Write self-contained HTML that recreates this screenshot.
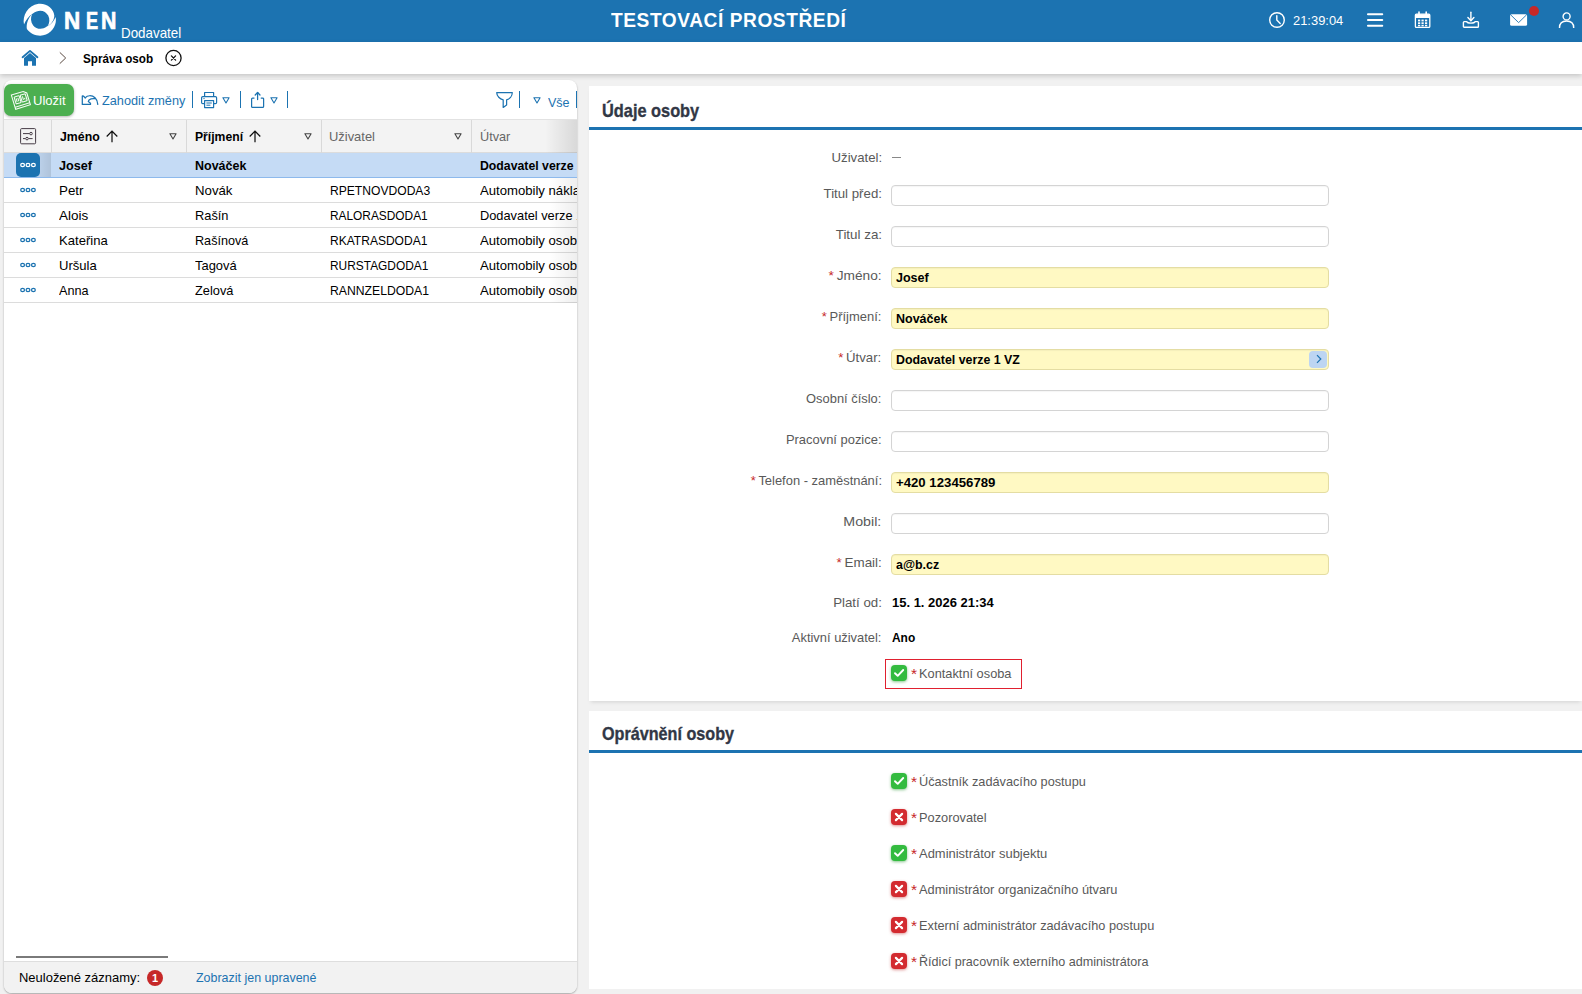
<!DOCTYPE html>
<html lang="cs">
<head>
<meta charset="utf-8">
<title>NEN - Správa osob</title>
<style>
*{box-sizing:border-box;margin:0;padding:0}
html,body{width:1582px;height:994px;overflow:hidden}
body{font-family:"Liberation Sans",sans-serif;font-size:13px;color:#000;background:#f1f1f1;position:relative}
.abs{position:absolute}
/* header */
#hdr{position:absolute;left:0;top:0;width:1582px;height:42px;background:#1c73b1}
#hdr .nen{position:absolute;top:7px;font-size:24px;font-weight:bold;color:#fff;line-height:28px;-webkit-text-stroke:.7px #fff}
#hdr .dod{position:absolute;left:120.5px;top:24.3px;font-size:14.2px;color:#fff;line-height:18px}
#hdr .title{position:absolute;left:611px;top:8px;font-size:20px;font-weight:bold;color:#fff;letter-spacing:.6px;line-height:24px}
#hdr .time{position:absolute;left:1293px;top:13px;font-size:13px;color:#fff;line-height:16px}
/* breadcrumb */
#bc{position:absolute;left:0;top:42px;width:1582px;height:32px;background:#fff;box-shadow:0 2px 5px rgba(0,0,0,.18)}
#bc .t{position:absolute;left:83px;top:10px;font-weight:bold;font-size:12px;line-height:15px}
/* left panel */
#lp{position:absolute;left:4px;top:80px;width:573px;height:913px;background:#fff;border-radius:8px;box-shadow:0 1px 2px rgba(0,0,0,.32);overflow:hidden}
/* right panels */
.rp{position:absolute;left:589px;width:993px;background:#fff}
#rp1{top:86px;height:615px;box-shadow:0 3px 4px -2px rgba(0,0,0,.13)}
#rp2{top:711px;height:278px}
.rp h2{position:absolute;left:13px;font-size:19px;font-weight:bold;color:#313745;line-height:22px;-webkit-text-stroke:.35px #313745}
.rp .bar{position:absolute;left:0;width:993px;height:3px;background:#1c73b1}

/* scaled text helper */
.sx{display:inline-block;white-space:nowrap;transform-origin:0 50%}
.sxr{display:inline-block;white-space:nowrap;transform-origin:100% 50%}
.in{position:absolute;left:0;top:0;width:1582px;height:994px}
#lp .in{left:-4px;top:-80px}
.blue{color:#1c73b1}
/* toolbar */
#save{position:absolute;left:4px;top:84.3px;width:70px;height:31.4px;background:#4caf50;border-radius:7px;box-shadow:0 1px 3px rgba(0,0,0,.3)}
.tb{position:absolute;font-size:13.5px;line-height:16px;color:#1c73b1}
.vsep{position:absolute;top:91px;width:1.3px;height:17px;background:#1c73b1}
/* grid */
#gh{position:absolute;left:4px;top:119px;width:573px;height:34px;background:#f3f3f3;border-top:1px solid #e2e2e2;border-bottom:1px solid #dcdcdc}
.cs{position:absolute;top:120px;width:1px;height:33px;background:#d9d9d9}
.ht{position:absolute;top:129px;font-size:13.3px;line-height:16px}
.hb{font-weight:bold;color:#000}
.hg{color:#666}
.row{position:absolute;left:4px;width:573px;height:25px;border-bottom:1px solid #dcdcdc;background:#fff}
.row.sel{background:#c5dbf5;border-bottom:1px solid #8db9ec}
.c{position:absolute;font-size:13.3px;line-height:16px;white-space:nowrap}
.b{font-weight:bold}
#ft{position:absolute;left:4px;top:961px;width:573px;height:32px;background:#f2f2f2;border-top:1px solid #dedede}

/* form */
.rp .in{left:-589px}
#rp1 .in{top:-86px}
#rp2 .in{top:-711px}
.lb{position:absolute;right:700.3px;font-size:13.6px;line-height:16px;color:#595959;white-space:nowrap;text-align:right}
.st{color:#c62828}
.ip{position:absolute;left:891px;width:438px;height:21px;border:1px solid #d4d4d4;border-radius:4px;background:#fff;box-shadow:inset 0 1px 1px rgba(0,0,0,.04)}
.ip.y{background:#fff9c3;border-color:#e4dda3}
.iv{position:absolute;left:896.2px;font-size:13.3px;line-height:16px;font-weight:bold;color:#000;white-space:nowrap}
.cb{position:absolute;left:891px;width:16px;height:16px;border-radius:4px;box-shadow:0 1px 2px rgba(0,0,0,.35)}
.cb.g{background:#33bb3f;box-shadow:0 1px 3px rgba(40,150,50,.55)}
.cb.r{background:#d32b30;box-shadow:0 1px 3px rgba(190,40,40,.5)}
.cl{position:absolute;left:912px;font-size:13.6px;line-height:16px;color:#595959;white-space:nowrap}
.cl.st{color:#c62828;margin-top:-.5px}
</style>
</head>
<body>
<div id="hdr">
  
<svg class="abs" style="left:22px;top:2px" width="36" height="36" viewBox="0 0 36 36">
 <path fill="#fff" d="M2.0 22.6 C0.3 14 5.5 3.2 16.5 1.8 C25 1 31.6 6.6 32.3 13.4 C32.4 17.6 29.6 21.8 25.6 24.2 C27.6 21.4 28 17.2 26.2 13.6 C23.6 8.6 17 6.6 10.9 11.5 C7 13.8 3.8 18 2.0 22.6Z"/>
 <path fill="#fff" d="M33.6 14.9 C35.2 21.6 31 29.6 24 32.6 C17 35.4 9 32.6 4.9 27 C4 22 6.4 15.4 10.1 11.9 C8.4 15.6 8.6 20 11.2 23.4 C14.4 27.4 20.4 28 24.8 24.6 C28.8 22.6 32 19 33.6 14.9Z"/>
</svg>
<svg class="abs" style="left:1268px;top:11px" width="18" height="18" viewBox="0 0 18 18"><circle cx="9" cy="9" r="7.3" fill="none" stroke="#fff" stroke-width="1.4"/><path d="M8.8 4.8 V9 L12.2 12.4" fill="none" stroke="#fff" stroke-width="1.4" stroke-linecap="round" stroke-linejoin="round"/></svg>
<svg class="abs" style="left:1366px;top:12px" width="18" height="16" viewBox="0 0 18 16"><g stroke="#fff" stroke-width="2.1" stroke-linecap="round"><path d="M2 2.3 H16.2"/><path d="M2 8 H16.2"/><path d="M2 13.7 H16.2"/></g></svg>
<svg class="abs" style="left:1414px;top:11px" width="18" height="18" viewBox="0 0 18 18">
 <path d="M1.4 3.2 H15.8 V7 H1.4 Z" fill="#fff"/>
 <rect x="1.4" y="3.2" width="14.4" height="13.2" rx="1" fill="none" stroke="#fff" stroke-width="1.3"/>
 <path d="M5 1 V4 M12.2 1 V4" stroke="#fff" stroke-width="1.6" stroke-linecap="round"/>
 <g fill="#fff"><rect x="4" y="8.6" width="2.2" height="1.8"/><rect x="7.5" y="8.6" width="2.2" height="1.8"/><rect x="11" y="8.6" width="2.2" height="1.8"/><rect x="4" y="11.3" width="2.2" height="1.8"/><rect x="7.5" y="11.3" width="2.2" height="1.8"/><rect x="11" y="11.3" width="2.2" height="1.8"/><rect x="4" y="13.9" width="2.2" height="1.4"/><rect x="7.5" y="13.9" width="2.2" height="1.4"/><rect x="11" y="13.9" width="2.2" height="1.4"/></g>
</svg>
<svg class="abs" style="left:1462px;top:11px" width="18" height="18" viewBox="0 0 18 18"><g fill="none" stroke="#fff" stroke-width="1.4" stroke-linecap="round" stroke-linejoin="round"><path d="M8.9 1.2 V9.6"/><path d="M5.9 6.6 L8.9 9.8 L11.9 6.6"/><path d="M2.2 10.6 H4.6 C5.6 12.6 12.2 12.6 13.2 10.6 H15.6 C16.2 10.6 16.4 11 16.4 11.4 V15.4 C16.4 15.9 16.1 16.2 15.6 16.2 H2.2 C1.7 16.2 1.4 15.9 1.4 15.4 V11.4 C1.4 11 1.6 10.6 2.2 10.6 Z"/></g></svg>
<svg class="abs" style="left:1509px;top:13px" width="20" height="14" viewBox="0 0 20 14"><rect x="1.1" y="1.2" width="17" height="11.6" rx="1.6" fill="#fff"/><path d="M1.6 1.8 L9.6 9.6 L17.6 1.8" fill="none" stroke="#1c73b1" stroke-width="0.9"/></svg>
<div class="abs" style="left:1529px;top:6px;width:10px;height:10px;border-radius:5px;background:#c62828"></div>
<svg class="abs" style="left:1558px;top:11px" width="18" height="18" viewBox="0 0 18 18"><g fill="none" stroke="#fff" stroke-width="1.4"><circle cx="8.6" cy="5.4" r="3.5"/><path d="M1.5 16.9 C1.5 12.4 4.5 10 8.6 10 C12.7 10 15.7 12.4 15.7 16.9"/></g></svg>
<div class="nen" style="left:64px"><span class="sx" id="n1" style="transform:scaleX(0.9342)">N</span></div><div class="nen" style="left:86.4px"><span class="sx" id="n2" style="transform:scaleX(0.7550)">E</span></div><div class="nen" style="left:101px"><span class="sx" id="n3" style="transform:scaleX(0.8875)">N</span></div>
  <div class="dod"><span class="sx" id="dod" style="transform:scaleX(0.9430)">Dodavatel</span></div>
  <div class="title"><span class="sx" id="ttl" style="transform:scaleX(0.9561)">TESTOVACÍ PROSTŘEDÍ</span></div>
  <div class="time"><span class="sx" id="tim" style="transform:scaleX(0.9940)">21:39:04</span></div>
</div>
<div id="bc">

<svg class="abs" style="left:21px;top:7px" width="18" height="18" viewBox="0 0 18 18"><path d="M1.6 8.2 L9 1.9 L16.4 8.2" fill="none" stroke="#1c73b1" stroke-width="1.9" stroke-linecap="round" stroke-linejoin="round"/><path d="M3 8.9 L9 3.9 L15 8.9 V16.8 H11 V12.2 H7 V16.8 H3 Z" fill="#1c73b1"/></svg>
<svg class="abs" style="left:58px;top:9px" width="10" height="14" viewBox="0 0 10 14"><path d="M1.8 1.4 L7.7 7 L1.8 12.6" fill="none" stroke="#5a4a42" stroke-width="1"/></svg>
<svg class="abs" style="left:164px;top:7px" width="19" height="18" viewBox="0 0 19 18"><circle cx="9.5" cy="9" r="7.6" fill="none" stroke="#111" stroke-width="1.3"/><path d="M7.4 6.9 L11.6 11.1 M11.6 6.9 L7.4 11.1" stroke="#111" stroke-width="1.3" stroke-linecap="round"/></svg>
  <div class="t"><span class="sx" id="bct" style="transform:scaleX(0.9719)">Správa osob</span></div>
</div>
<div id="lp">
<div class="in">
<div id="save"></div>

<svg class="abs" style="left:9px;top:88px" width="24" height="24" viewBox="0 0 24 24"><g transform="rotate(-17 12 12)" fill="none" stroke="#fff" stroke-opacity=".95" stroke-width="1.05"><path d="M4.2 4.5 H16.6 L19.6 7 V19.3 H4.2 Z"/><rect x="6.2" y="7.2" width="5.2" height="7.2" rx=".6"/><rect x="12.6" y="7.2" width="5.2" height="7.2" rx=".6"/><path d="M7.8 9 V12.6 M9.6 9 V12.6 M14.4 9 V12.6 M16 11 V12.6"/><path d="M4.4 17.2 H19.4"/></g></svg>
<svg class="abs" style="left:81px;top:94px" width="18" height="12" viewBox="0 0 18 12"><g fill="none" stroke="#1c73b1" stroke-width="1.25" stroke-linejoin="round" stroke-linecap="round"><path d="M4.2 3.8 L2.6 2.2 L1.3 1.9 V10.4 H9.5 V9.2 L7.3 7.6 L8 6 C9.5 4.9 11.5 4.5 13.6 4.7"/><path d="M4.2 3.8 C5.4 2.4 7 1.8 8.6 1.75 C12.5 1.6 16.4 4.5 16.8 10.4"/></g></svg>
<svg class="abs" style="left:200px;top:91px" width="18" height="18" viewBox="0 0 18 18"><g fill="none" stroke="#1c73b1" stroke-width="1.2" stroke-linejoin="round"><path d="M4.6 5.6 V1.5 H13.6 V5.6"/><path d="M4.6 12.6 H2.8 C2.1 12.6 1.6 12.1 1.6 11.4 V6.8 C1.6 6.1 2.1 5.6 2.8 5.6 H15.4 C16.1 5.6 16.6 6.1 16.6 6.8 V11.4 C16.6 12.1 16.1 12.6 15.4 12.6 H13.6"/><rect x="4.6" y="9.6" width="9" height="7"/><path d="M6.4 12 H11.8 M6.4 14.2 H10.4" stroke-width="1"/><path d="M3.4 7.6 H4.6" stroke-width="1"/></g></svg>
<svg class="abs" style="left:250px;top:91px" width="16" height="18" viewBox="0 0 16 18"><g fill="none" stroke="#1c73b1" stroke-width="1.25" stroke-linecap="round" stroke-linejoin="round"><path d="M4 7 H2.6 C2 7 1.6 7.4 1.6 8 V15.4 C1.6 16 2 16.4 2.6 16.4 H12.6 C13.2 16.4 13.6 16 13.6 15.4 V8 C13.6 7.4 13.2 7 12.6 7 H11.2"/><path d="M7.6 1.6 V8.6"/><path d="M5.2 4 L7.6 1.5 L10 4"/></g></svg>
<svg class="abs" style="left:495px;top:91px" width="19" height="18" viewBox="0 0 19 18"><path d="M1.7 1.6 H17.3 C17.3 5.2 14.4 8 11.6 8.8 V14 L8.2 16.4 V8.8 C5 8 1.7 5.2 1.7 1.6 Z" fill="none" stroke="#1c73b1" stroke-width="1.25" stroke-linejoin="round"/></svg>
<div class="tb" style="left:33px;top:92.5px;color:#fff"><span class="sx" id="t_save" style="transform:scaleX(0.9666)">Uložit</span></div>
<div class="tb" style="left:102px;top:93px"><span class="sx" id="t_zah" style="transform:scaleX(0.9410)">Zahodit změny</span></div>
<div class="vsep" style="left:192px"></div>
<svg class="abs" style="left:222px;top:97px" width="8" height="7" viewBox="0 0 8 7"><path d="M0.9 0.8 H7.1 L4 6 Z" fill="none" stroke="#1c73b1" stroke-width="1.1" stroke-linejoin="round"/></svg>
<div class="vsep" style="left:240px"></div>
<svg class="abs" style="left:270px;top:97px" width="8" height="7" viewBox="0 0 8 7"><path d="M0.9 0.8 H7.1 L4 6 Z" fill="none" stroke="#1c73b1" stroke-width="1.1" stroke-linejoin="round"/></svg>
<div class="vsep" style="left:287px"></div>
<div class="vsep" style="left:519px"></div>
<svg class="abs" style="left:533px;top:97px" width="8" height="7" viewBox="0 0 8 7"><path d="M0.9 0.8 H7.1 L4 6 Z" fill="none" stroke="#1c73b1" stroke-width="1.1" stroke-linejoin="round"/></svg>
<div class="tb" style="left:548px;top:95px;font-size:12.4px"><span class="sx" id="t_vse" style="transform:scaleX(1.0097)">Vše</span></div>
<div class="vsep" style="left:576px"></div>
<div id="gh"></div>
<svg class="abs" style="left:19px;top:127px" width="18" height="18" viewBox="0 0 18 18"><g fill="none" stroke="#463c46" stroke-width="1"><rect x="1.6" y="1.6" width="15" height="15.2" rx="1"/><path d="M4 6.6 H10.6 M4 11.6 H6.4 M9.6 11.6 H13.6"/><circle cx="12" cy="6.6" r="1.3"/><circle cx="8" cy="11.6" r="1.3"/></g></svg>
<div class="cs" style="left:51px"></div><div class="cs" style="left:186px"></div><div class="cs" style="left:321px"></div><div class="cs" style="left:471px"></div>
<div class="ht hb" style="left:60px"><span class="sx" id="h1" style="transform:scaleX(0.9262)">Jméno</span></div><svg class="abs" style="left:105.5px;top:129.5px" width="12" height="13" viewBox="0 0 12 13"><path d="M6 12.2 V1.2 M0.7 6.5 L6 1.1 L11.3 6.5" fill="none" stroke="#111" stroke-width="1.25"/></svg><svg class="abs" style="left:169px;top:133px" width="8" height="7" viewBox="0 0 8 7"><path d="M0.9 0.8 H7.1 L4 6 Z" fill="none" stroke="#444" stroke-width="1.1" stroke-linejoin="round"/></svg>
<div class="ht hb" style="left:195px"><span class="sx" id="h2" style="transform:scaleX(0.9151)">Příjmení</span></div><svg class="abs" style="left:248.5px;top:129.5px" width="12" height="13" viewBox="0 0 12 13"><path d="M6 12.2 V1.2 M0.7 6.5 L6 1.1 L11.3 6.5" fill="none" stroke="#111" stroke-width="1.25"/></svg><svg class="abs" style="left:304px;top:133px" width="8" height="7" viewBox="0 0 8 7"><path d="M0.9 0.8 H7.1 L4 6 Z" fill="none" stroke="#444" stroke-width="1.1" stroke-linejoin="round"/></svg>
<div class="ht hg" style="left:329.4px"><span class="sx" id="h3" style="transform:scaleX(0.9714)">Uživatel</span></div><svg class="abs" style="left:454px;top:133px" width="8" height="7" viewBox="0 0 8 7"><path d="M0.9 0.8 H7.1 L4 6 Z" fill="none" stroke="#444" stroke-width="1.1" stroke-linejoin="round"/></svg>
<div class="ht hg" style="left:480px"><span class="sx" id="h4" style="transform:scaleX(0.9545)">Útvar</span></div>
<div class="row sel" style="top:153px"></div>
<div class="abs" style="left:30px;top:153px;width:21px;height:24px;background:linear-gradient(90deg,rgba(0,0,0,0),rgba(0,0,0,.11))"></div><div class="abs" style="left:16px;top:153px;width:24px;height:24px;border-radius:5px;background:#1c73b1"></div>
<svg class="abs" style="left:20px;top:162px" width="16" height="6" viewBox="0 0 16 6"><g fill="none" stroke="#fff" stroke-width="1.25"><ellipse cx="2.6" cy="3" rx="1.9" ry="1.6"/><ellipse cx="8" cy="3" rx="1.9" ry="1.6"/><ellipse cx="13.4" cy="3" rx="1.9" ry="1.6"/></g></svg>
<div class="c b" style="left:59.3px;top:158px"><span class="sx" id="rc1" style="transform:scaleX(0.9507)">Josef</span></div><div class="c b" style="left:194.5px;top:158px"><span class="sx" id="rc2" style="transform:scaleX(0.9384)">Nováček</span></div><div class="c b" style="left:479.5px;top:158px"><span class="sx" id="rc3" style="transform:scaleX(0.9230)">Dodavatel verze 1 VZ</span></div>
<div class="row" style="top:178px"></div>
<svg class="abs" style="left:20px;top:187px" width="16" height="6" viewBox="0 0 16 6"><g fill="none" stroke="#1c73b1" stroke-width="1.25"><ellipse cx="2.6" cy="3" rx="1.9" ry="1.6"/><ellipse cx="8" cy="3" rx="1.9" ry="1.6"/><ellipse cx="13.4" cy="3" rx="1.9" ry="1.6"/></g></svg>
<div class="c" style="left:59.3px;top:183px"><span class="sx" id="rc4" style="transform:scaleX(1.0043)">Petr</span></div><div class="c" style="left:194.5px;top:183px"><span class="sx" id="rc5" style="transform:scaleX(0.9945)">Novák</span></div><div class="c" style="left:329.5px;top:183px"><span class="sx" id="rc6" style="transform:scaleX(0.9098)">RPETNOVDODA3</span></div><div class="c" style="left:479.5px;top:183px"><span class="sx" id="rc7" style="transform:scaleX(0.9870)">Automobily nákladní</span></div>
<div class="row" style="top:203px"></div>
<svg class="abs" style="left:20px;top:212px" width="16" height="6" viewBox="0 0 16 6"><g fill="none" stroke="#1c73b1" stroke-width="1.25"><ellipse cx="2.6" cy="3" rx="1.9" ry="1.6"/><ellipse cx="8" cy="3" rx="1.9" ry="1.6"/><ellipse cx="13.4" cy="3" rx="1.9" ry="1.6"/></g></svg>
<div class="c" style="left:59.3px;top:208px"><span class="sx" id="rc8" style="transform:scaleX(1.0141)">Alois</span></div><div class="c" style="left:194.5px;top:208px"><span class="sx" id="rc9" style="transform:scaleX(0.9635)">Rašín</span></div><div class="c" style="left:329.5px;top:208px"><span class="sx" id="rc10" style="transform:scaleX(0.8934)">RALORASDODA1</span></div><div class="c" style="left:479.5px;top:208px"><span class="sx" id="rc11" style="transform:scaleX(0.9630)">Dodavatel verze 1 VZ</span></div>
<div class="row" style="top:228px"></div>
<svg class="abs" style="left:20px;top:237px" width="16" height="6" viewBox="0 0 16 6"><g fill="none" stroke="#1c73b1" stroke-width="1.25"><ellipse cx="2.6" cy="3" rx="1.9" ry="1.6"/><ellipse cx="8" cy="3" rx="1.9" ry="1.6"/><ellipse cx="13.4" cy="3" rx="1.9" ry="1.6"/></g></svg>
<div class="c" style="left:59.3px;top:233px"><span class="sx" id="rc12" style="transform:scaleX(0.9835)">Kateřina</span></div><div class="c" style="left:194.5px;top:233px"><span class="sx" id="rc13" style="transform:scaleX(0.9491)">Rašínová</span></div><div class="c" style="left:329.5px;top:233px"><span class="sx" id="rc14" style="transform:scaleX(0.9048)">RKATRASDODA1</span></div><div class="c" style="left:479.5px;top:233px"><span class="sx" id="rc15" style="transform:scaleX(0.9870)">Automobily osobní</span></div>
<div class="row" style="top:253px"></div>
<svg class="abs" style="left:20px;top:262px" width="16" height="6" viewBox="0 0 16 6"><g fill="none" stroke="#1c73b1" stroke-width="1.25"><ellipse cx="2.6" cy="3" rx="1.9" ry="1.6"/><ellipse cx="8" cy="3" rx="1.9" ry="1.6"/><ellipse cx="13.4" cy="3" rx="1.9" ry="1.6"/></g></svg>
<div class="c" style="left:59.3px;top:258px"><span class="sx" id="rc16" style="transform:scaleX(0.9812)">Uršula</span></div><div class="c" style="left:194.5px;top:258px"><span class="sx" id="rc17" style="transform:scaleX(0.9718)">Tagová</span></div><div class="c" style="left:329.5px;top:258px"><span class="sx" id="rc18" style="transform:scaleX(0.8957)">RURSTAGDODA1</span></div><div class="c" style="left:479.5px;top:258px"><span class="sx" id="rc19" style="transform:scaleX(0.9870)">Automobily osobní</span></div>
<div class="row" style="top:278px"></div>
<svg class="abs" style="left:20px;top:287px" width="16" height="6" viewBox="0 0 16 6"><g fill="none" stroke="#1c73b1" stroke-width="1.25"><ellipse cx="2.6" cy="3" rx="1.9" ry="1.6"/><ellipse cx="8" cy="3" rx="1.9" ry="1.6"/><ellipse cx="13.4" cy="3" rx="1.9" ry="1.6"/></g></svg>
<div class="c" style="left:59.3px;top:283px"><span class="sx" id="rc20" style="transform:scaleX(0.9515)">Anna</span></div><div class="c" style="left:194.5px;top:283px"><span class="sx" id="rc21" style="transform:scaleX(0.9620)">Zelová</span></div><div class="c" style="left:329.5px;top:283px"><span class="sx" id="rc22" style="transform:scaleX(0.9182)">RANNZELDODA1</span></div><div class="c" style="left:479.5px;top:283px"><span class="sx" id="rc23" style="transform:scaleX(0.9870)">Automobily osobní</span></div>

<div class="abs" style="left:545px;top:120px;width:32px;height:33px;background:linear-gradient(90deg,rgba(0,0,0,0),rgba(0,0,0,.11))"></div><div class="abs" style="left:549px;top:178px;width:28px;height:125px;background:linear-gradient(90deg,rgba(0,0,0,0),rgba(0,0,0,.065))"></div>
<div class="abs" style="left:16px;top:956px;width:152px;height:2px;background:#7a7a7a"></div>
<div id="ft"></div>
<div class="c" style="left:19.2px;top:970px"><span class="sx" id="f1" style="transform:scaleX(0.9754)">Neuložené záznamy:</span></div>
<div class="abs" style="left:147px;top:970px;width:16px;height:16px;border-radius:8px;background:#c62828;color:#fff;font-weight:bold;font-size:11px;line-height:16px;text-align:center">1</div>
<div class="c blue" style="left:196px;top:970px"><span class="sx" id="f2" style="transform:scaleX(0.9367)">Zobrazit jen upravené</span></div>
</div>
</div>
<div class="rp" id="rp1">
  <h2 style="top:14px"><span class="sx" id="hd1" style="transform:scaleX(0.8603)">Údaje osoby</span></h2>
  <div class="bar" style="top:41px"></div>
<div class="in">
<div class="lb" style="top:150px"><span class="sxr" id="l0" style="transform:scaleX(0.9702)">Uživatel:</span></div>
<div class="lb" style="top:186px"><span class="sxr" id="l1" style="transform:scaleX(0.9745)">Titul před:</span></div>
<div class="lb" style="top:227px"><span class="sxr" id="l2" style="transform:scaleX(0.9848)">Titul za:</span></div>
<div class="lb" style="top:268px"><span class="sxr" id="l3" style="transform:scaleX(1.0078)"><span class="st">*</span>&thinsp;Jméno:</span></div>
<div class="lb" style="top:309px"><span class="sxr" id="l4" style="transform:scaleX(0.9542)"><span class="st">*</span>&thinsp;Příjmení:</span></div>
<div class="lb" style="top:350px"><span class="sxr" id="l5" style="transform:scaleX(0.9720)"><span class="st">*</span>&thinsp;Útvar:</span></div>
<div class="lb" style="top:391px"><span class="sxr" id="l6" style="transform:scaleX(0.9487)">Osobní číslo:</span></div>
<div class="lb" style="top:432px"><span class="sxr" id="l7" style="transform:scaleX(0.9513)">Pracovní pozice:</span></div>
<div class="lb" style="top:473px"><span class="sxr" id="l8" style="transform:scaleX(0.9508)"><span class="st">*</span>&thinsp;Telefon - zaměstnání:</span></div>
<div class="lb" style="top:514px"><span class="sxr" id="l9" style="transform:scaleX(1.0468)">Mobil:</span></div>
<div class="lb" style="top:555px"><span class="sxr" id="l10" style="transform:scaleX(0.9864)"><span class="st">*</span>&thinsp;Email:</span></div>
<div class="lb" style="top:595px"><span class="sxr" id="l11" style="transform:scaleX(0.9771)">Platí od:</span></div>
<div class="lb" style="top:630px"><span class="sxr" id="l12" style="transform:scaleX(0.9486)">Aktivní uživatel:</span></div>
<div class="ip " style="top:185px"></div>
<div class="ip " style="top:226px"></div>
<div class="ip y" style="top:267px"></div>
<div class="ip y" style="top:308px"></div>
<div class="ip y" style="top:349px"></div>
<div class="ip " style="top:390px"></div>
<div class="ip " style="top:431px"></div>
<div class="ip y" style="top:472px"></div>
<div class="ip " style="top:513px"></div>
<div class="ip y" style="top:554px"></div>
<div class="iv" style="top:270px"><span class="sx" id="v0" style="transform:scaleX(0.9420)">Josef</span></div>
<div class="iv" style="top:311px"><span class="sx" id="v1" style="transform:scaleX(0.9384)">Nováček</span></div>
<div class="iv" style="top:352px"><span class="sx" id="v2" style="transform:scaleX(0.9317)">Dodavatel verze 1 VZ</span></div>
<div class="iv" style="top:475px"><span class="sx" id="v3" style="transform:scaleX(0.9919)">+420 123456789</span></div>
<div class="iv" style="top:557px"><span class="sx" id="v4" style="transform:scaleX(0.9342)">a@b.cz</span></div>
<div class="abs" style="left:892px;top:157px;width:9px;height:1px;background:#888"></div>
<div class="iv" style="left:892px;top:595px"><span class="sx" id="v5" style="transform:scaleX(0.9758)">15. 1. 2026 21:34</span></div>
<div class="iv" style="left:892px;top:630px"><span class="sx" id="v6" style="transform:scaleX(0.8960)">Ano</span></div>
<div class="abs" style="left:1309px;top:351px;width:18px;height:17px;border-radius:4px;background:#bdd5f2"></div><svg class="abs" style="left:1314.5px;top:354.2px" width="8" height="10" viewBox="0 0 8 10"><path d="M2 1.2 L5.8 5 L2 8.8" fill="none" stroke="#1c73b1" stroke-width="1.2"/></svg>
<div class="abs" style="left:885px;top:659px;width:137px;height:30px;border:1px solid #e0202f"></div>
<div class="cb g" style="top:665px"><svg class="abs" style="left:2px;top:3px" width="12" height="10" viewBox="0 0 12 10"><path d="M2 5.2 L4.7 7.8 L10.2 2" fill="none" stroke="#fff" stroke-width="1.9" stroke-linecap="round" stroke-linejoin="round"/></svg></div><div class="cl st" style="left:911px;top:666px;font-size:15.5px">*</div><div class="cl" style="left:918.5px;top:666px"><span class="sx" id="k0" style="transform:scaleX(0.9414)">Kontaktní osoba</span></div>
</div>
</div>
<div class="rp" id="rp2">
  <h2 style="top:12px"><span class="sx" id="hd2" style="transform:scaleX(0.8509)">Oprávnění osoby</span></h2>
  <div class="bar" style="top:39px"></div>
<div class="in">
<div class="cb g" style="top:773px"><svg class="abs" style="left:2px;top:3px" width="12" height="10" viewBox="0 0 12 10"><path d="M2 5.2 L4.7 7.8 L10.2 2" fill="none" stroke="#fff" stroke-width="1.9" stroke-linecap="round" stroke-linejoin="round"/></svg></div><div class="cl st" style="left:911px;top:774px;font-size:15.5px">*</div><div class="cl" style="left:918.5px;top:774px"><span class="sx" id="p0" style="transform:scaleX(0.9354)">Účastník zadávacího postupu</span></div>
<div class="cb r" style="top:809px"><svg class="abs" style="left:3px;top:3px" width="10" height="10" viewBox="0 0 10 10"><path d="M1.9 1.9 L8.1 8.1 M8.1 1.9 L1.9 8.1" fill="none" stroke="#fff" stroke-width="2.2" stroke-linecap="round"/></svg></div><div class="cl st" style="left:911px;top:810px;font-size:15.5px">*</div><div class="cl" style="left:918.5px;top:810px"><span class="sx" id="p1" style="transform:scaleX(0.9400)">Pozorovatel</span></div>
<div class="cb g" style="top:845px"><svg class="abs" style="left:2px;top:3px" width="12" height="10" viewBox="0 0 12 10"><path d="M2 5.2 L4.7 7.8 L10.2 2" fill="none" stroke="#fff" stroke-width="1.9" stroke-linecap="round" stroke-linejoin="round"/></svg></div><div class="cl st" style="left:911px;top:846px;font-size:15.5px">*</div><div class="cl" style="left:918.5px;top:846px"><span class="sx" id="p2" style="transform:scaleX(0.9536)">Administrátor subjektu</span></div>
<div class="cb r" style="top:881px"><svg class="abs" style="left:3px;top:3px" width="10" height="10" viewBox="0 0 10 10"><path d="M1.9 1.9 L8.1 8.1 M8.1 1.9 L1.9 8.1" fill="none" stroke="#fff" stroke-width="2.2" stroke-linecap="round"/></svg></div><div class="cl st" style="left:911px;top:882px;font-size:15.5px">*</div><div class="cl" style="left:918.5px;top:882px"><span class="sx" id="p3" style="transform:scaleX(0.9414)">Administrátor organizačního útvaru</span></div>
<div class="cb r" style="top:917px"><svg class="abs" style="left:3px;top:3px" width="10" height="10" viewBox="0 0 10 10"><path d="M1.9 1.9 L8.1 8.1 M8.1 1.9 L1.9 8.1" fill="none" stroke="#fff" stroke-width="2.2" stroke-linecap="round"/></svg></div><div class="cl st" style="left:911px;top:918px;font-size:15.5px">*</div><div class="cl" style="left:918.5px;top:918px"><span class="sx" id="p4" style="transform:scaleX(0.9378)">Externí administrátor zadávacího postupu</span></div>
<div class="cb r" style="top:953px"><svg class="abs" style="left:3px;top:3px" width="10" height="10" viewBox="0 0 10 10"><path d="M1.9 1.9 L8.1 8.1 M8.1 1.9 L1.9 8.1" fill="none" stroke="#fff" stroke-width="2.2" stroke-linecap="round"/></svg></div><div class="cl st" style="left:911px;top:954px;font-size:15.5px">*</div><div class="cl" style="left:918.5px;top:954px"><span class="sx" id="p5" style="transform:scaleX(0.9259)">Řídicí pracovník externího administrátora</span></div>
</div>
</div>
</body>
</html>
